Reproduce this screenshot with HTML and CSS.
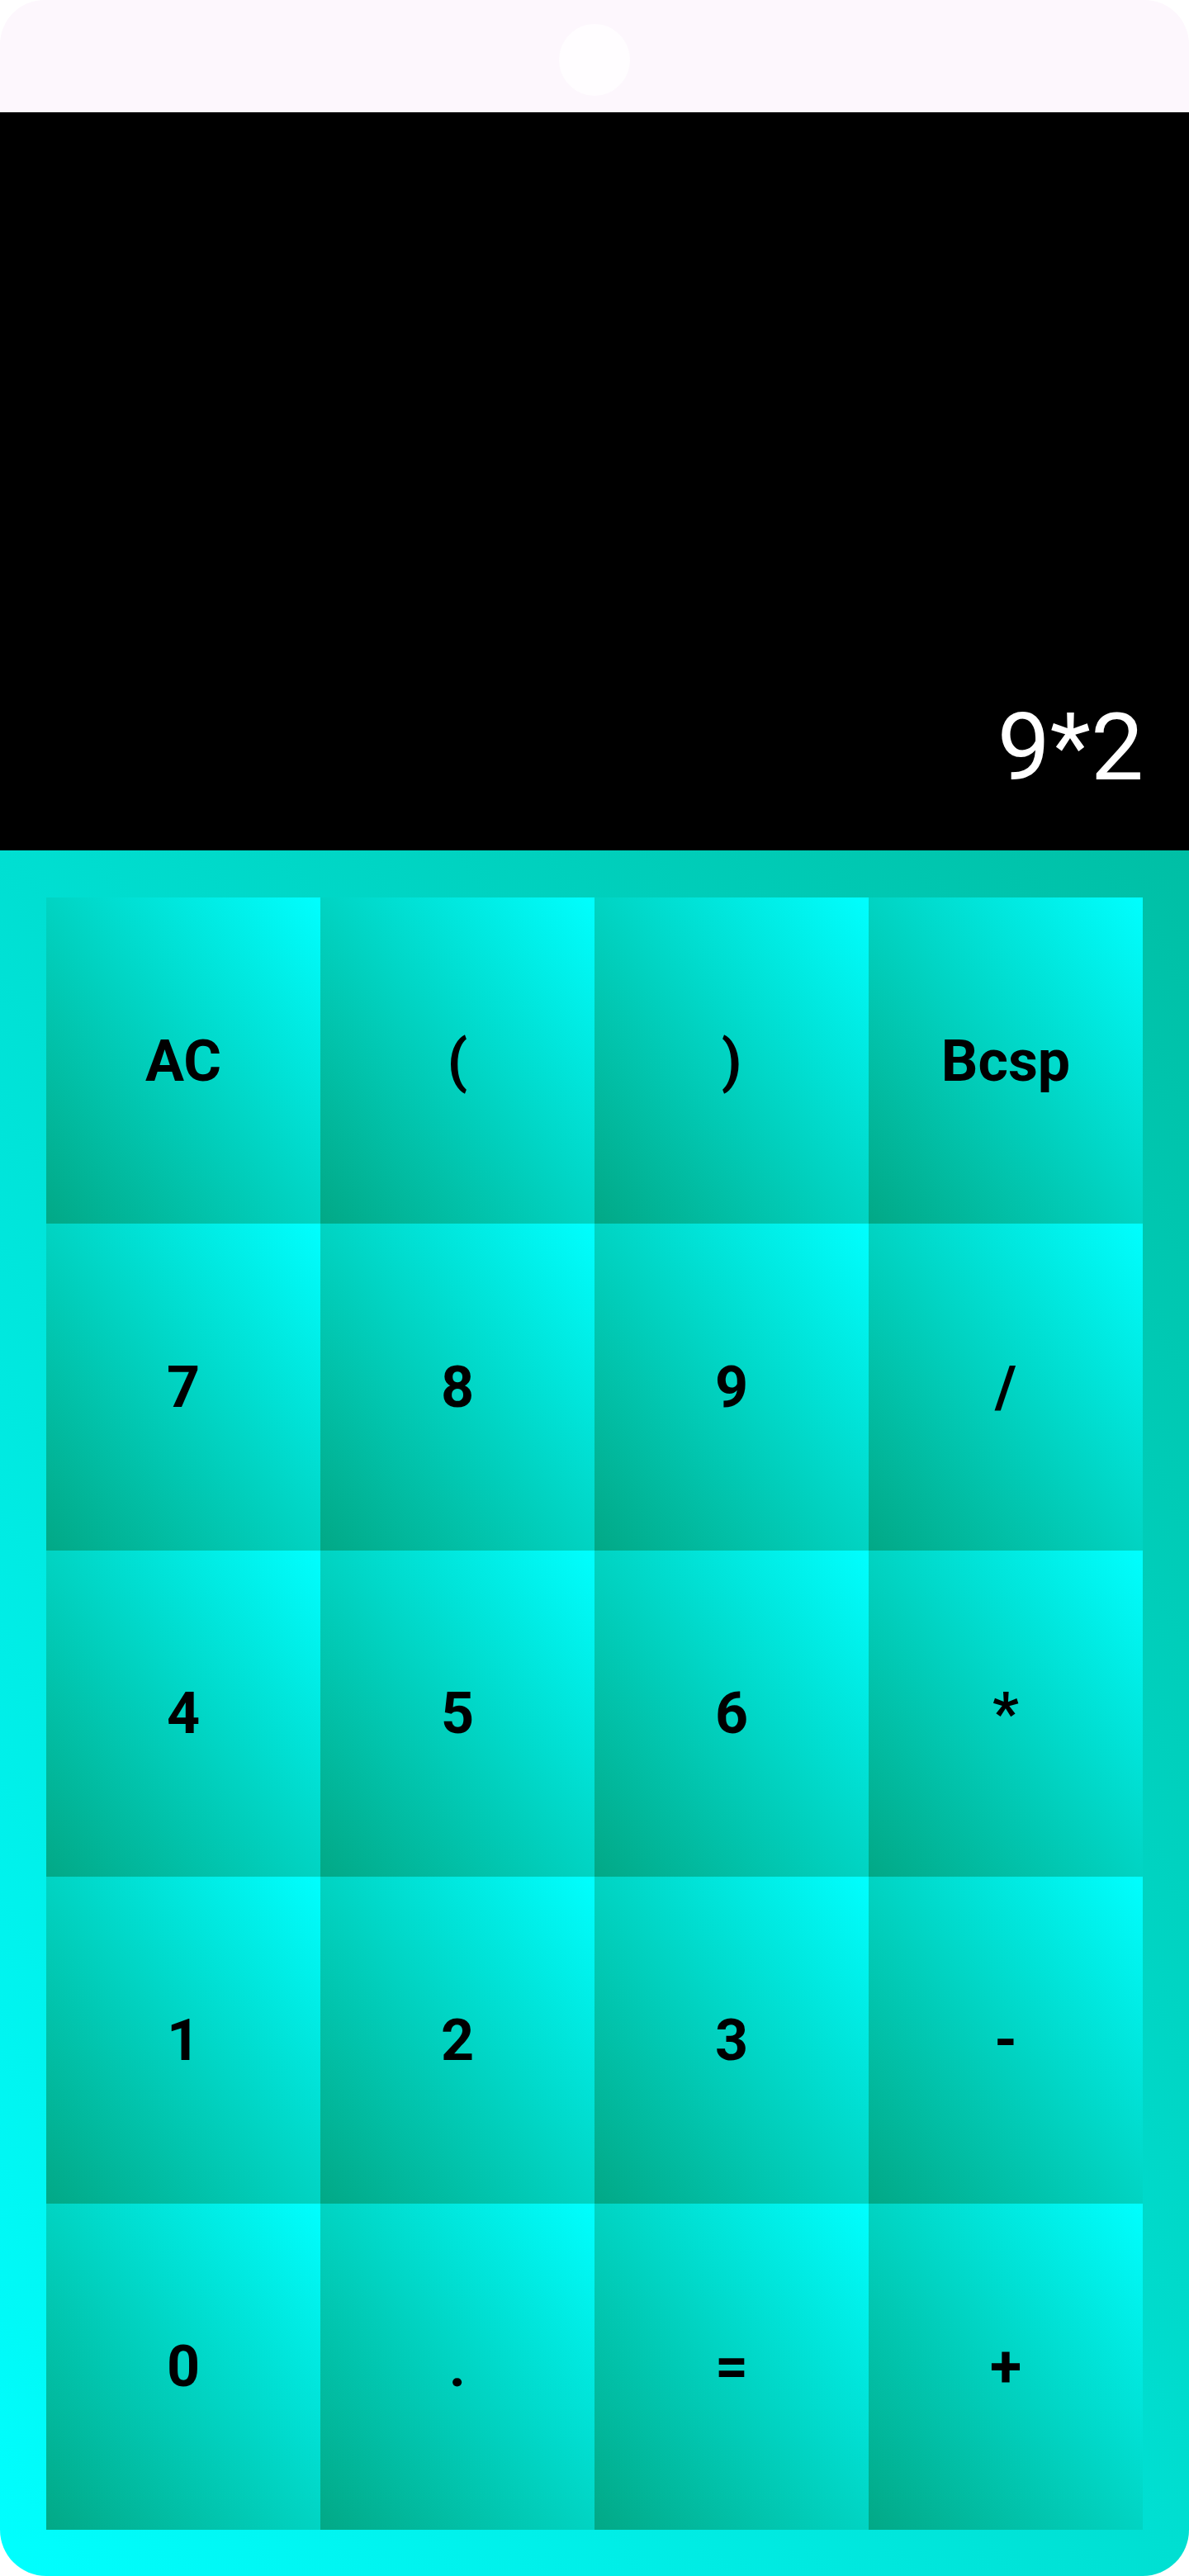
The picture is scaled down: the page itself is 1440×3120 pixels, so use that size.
FILE: index.html
```html
<!DOCTYPE html>
<html>
<head>
<meta charset="utf-8">
<link rel="stylesheet" href="styles.css">
</head>
<body>
<div class="phone">
  <div class="statusbar"><div class="camera"></div></div>
  <div class="display"><div class="expr">9*2</div></div>
  <div class="keypad">
    <div class="key">AC</div>
    <div class="key">(</div>
    <div class="key">)</div>
    <div class="key">Bcsp</div>
    <div class="key">7</div>
    <div class="key">8</div>
    <div class="key">9</div>
    <div class="key">/</div>
    <div class="key">4</div>
    <div class="key">5</div>
    <div class="key">6</div>
    <div class="key">*</div>
    <div class="key">1</div>
    <div class="key">2</div>
    <div class="key">3</div>
    <div class="key">-</div>
    <div class="key">0</div>
    <div class="key">.</div>
    <div class="key">=</div>
    <div class="key">+</div>
  </div>
</div>
</body>
</html>
```
FILE: styles.css
```css
html, body {
  margin: 0;
  padding: 0;
  background: #ffffff;
}
.phone {
  width: 1440px;
  height: 3120px;
  display: flex;
  flex-direction: column;
  font-family: Roboto, "Liberation Sans", sans-serif;
}
.statusbar {
  height: 136px;
  flex: none;
  box-sizing: border-box;
  padding-top: 29px;
  background: #fdf7fd;
  border-radius: 54px 54px 0 0;
  display: flex;
  justify-content: center;
  align-items: flex-start;
}
.camera {
  width: 86px;
  height: 87px;
  border-radius: 50%;
  background: #fffdff;
}
.display {
  height: 894px;
  flex: none;
  background: #000000;
  box-sizing: border-box;
  display: flex;
  justify-content: flex-end;
  align-items: flex-end;
  padding: 0 55px 58px 0;
}
.expr {
  color: #ffffff;
  font-size: 114px;
  font-weight: 400;
  line-height: normal;
}
.keypad {
  flex: 1;
  box-sizing: border-box;
  padding: 57px 56px 56px 56px;
  background: linear-gradient(to bottom left, #00bfa5 0%, #00ffff 100%);
  border-radius: 0 0 56px 56px;
  display: grid;
  grid-template-columns: repeat(4, 332px);
  grid-template-rows: repeat(5, 1fr);
}
.key {
  display: flex;
  justify-content: center;
  align-items: center;
  background: linear-gradient(to top right, #02a886 0%, #00ffff 100%);
  color: #000000;
  font-size: 70px;
  font-weight: 700;
}
```
